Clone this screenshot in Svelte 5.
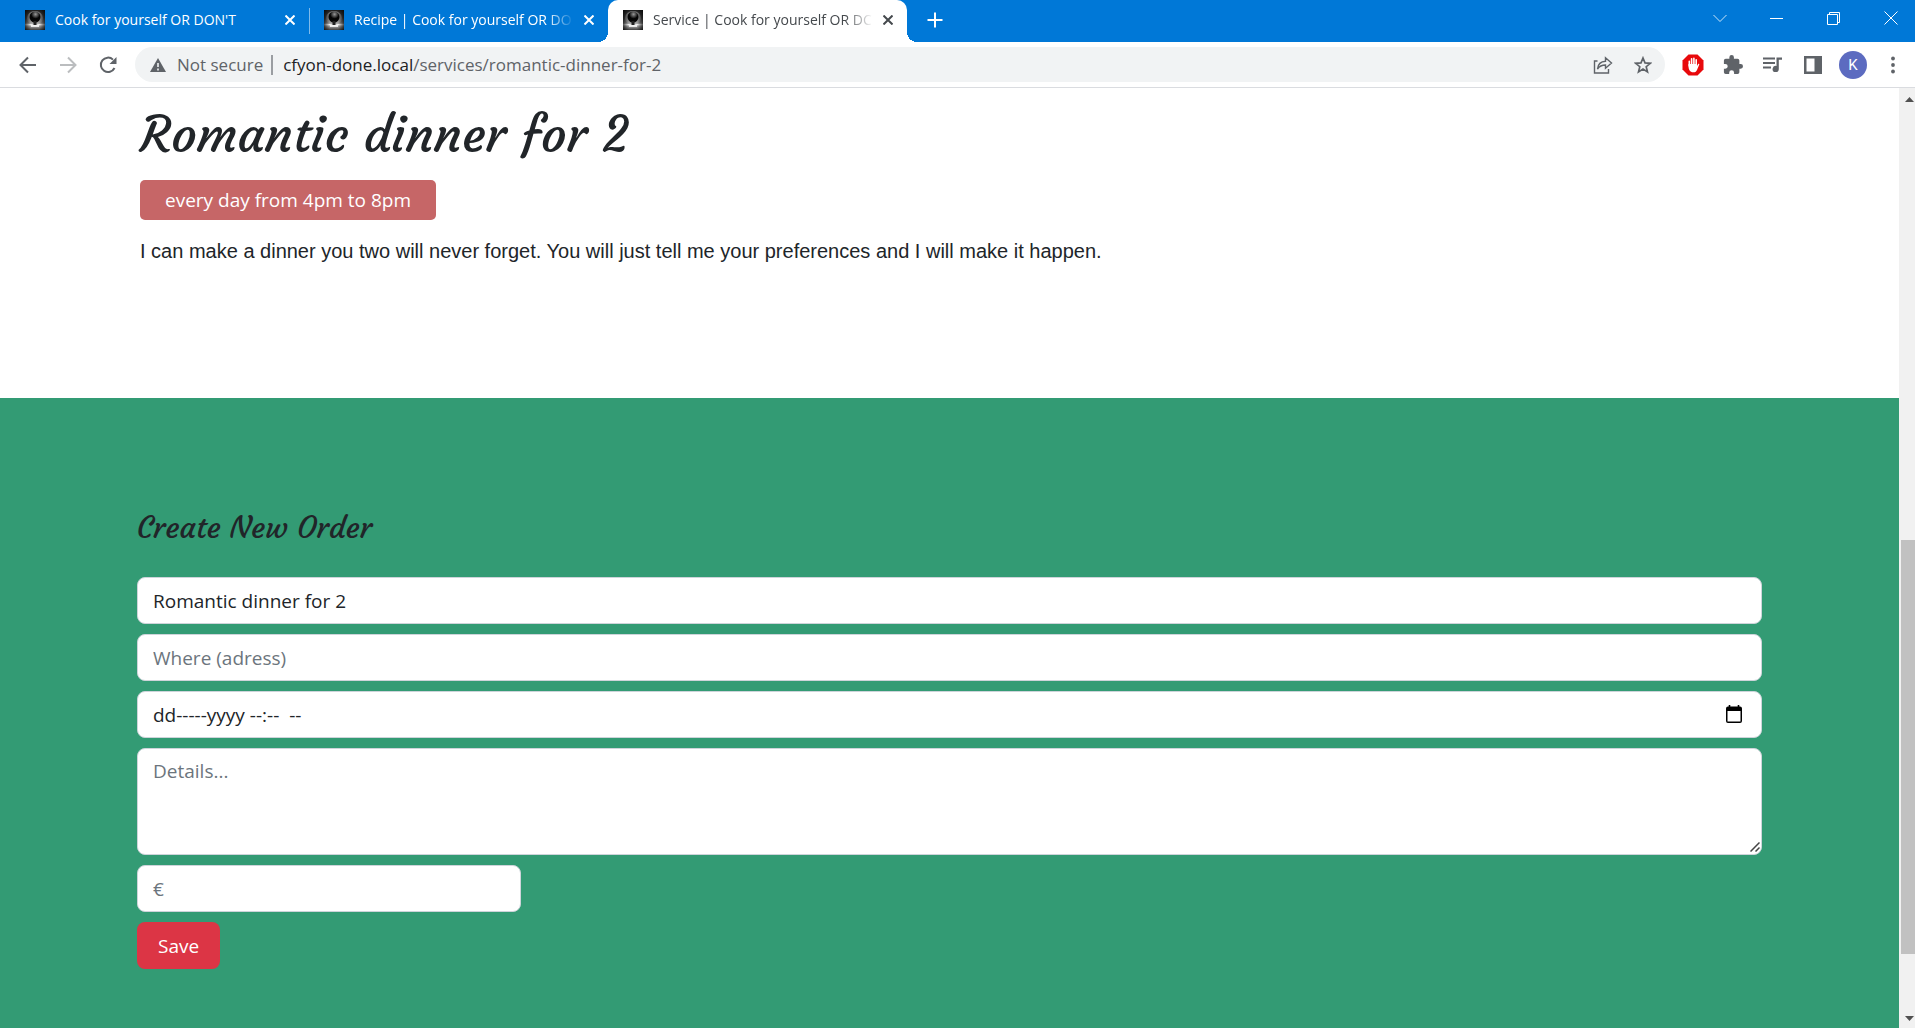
<script>
  const tabs = [
    { title: "Cook for yourself OR DON'T", active: false },
    { title: "Recipe | Cook for yourself OR DO", active: false },
    { title: "Service | Cook for yourself OR DC", active: true }
  ];
  let what = $state('Romantic dinner for 2');
  let where = $state('');
  let when = $state('dd-----yyyy --:--  --');
  let details = $state('');
  let price = $state('');
</script>

<div class="window">
  <header>
    <div class="tabstrip">
      {#each tabs as tab, i}
        <div class="tab" class:active={tab.active} class:divided={i === 0}>
          <svg class="favicon" viewBox="0 0 20 20" aria-hidden="true">
            <defs>
              <linearGradient id="bg{i}" x1="0" y1="0" x2="0" y2="1">
                <stop offset="0" stop-color="#1c1c1c" />
                <stop offset=".4" stop-color="#555" />
                <stop offset=".66" stop-color="#999" />
                <stop offset=".73" stop-color="#fff" />
                <stop offset=".8" stop-color="#aaa" />
                <stop offset="1" stop-color="#3c3c3c" />
              </linearGradient>
              <linearGradient id="edge{i}">
                <stop offset="0" stop-color="#000" stop-opacity=".7" />
                <stop offset=".3" stop-color="#000" stop-opacity="0" />
                <stop offset=".7" stop-color="#000" stop-opacity="0" />
                <stop offset="1" stop-color="#000" stop-opacity=".7" />
              </linearGradient>
              <radialGradient id="ball{i}" cx=".55" cy=".25" r=".4">
                <stop offset="0" stop-color="#999" />
                <stop offset="1" stop-color="#050505" />
              </radialGradient>
            </defs>
            <rect width="20" height="20" fill="url(#bg{i})" />
            <ellipse cx="10" cy="8" rx="8" ry="7" fill="#aaa" opacity=".6" />
            <rect width="20" height="20" fill="url(#edge{i})" />
            <circle cx="10" cy="7" r="5.5" fill="url(#ball{i})" />
            <path d="M8.500 11h3v4h-3z" fill="#222" />
            <path d="M6 16h8" stroke="#fff" stroke-width="1.500" />
          </svg>
          <span class="title" class:fade={i > 0}>{tab.title}</span>
          <button class="close" aria-label="Close tab">
            <svg width="10" height="10" viewBox="0 0 10 10"><path d="M.5.5l9 9M9.500.5l-9 9" /></svg>
          </button>
        </div>
      {/each}
      <button class="newtab" aria-label="New tab">
        <svg width="16" height="16" viewBox="0 0 16 16"><path d="M8 .5v15M.5 8h15" stroke="#fff" stroke-width="2" /></svg>
      </button>
      <div class="controls">
        <button aria-label="Search tabs"><svg width="14" height="14" viewBox="0 0 14 14"><path d="M.5 4l6.500 6.500L13.500 4" opacity=".8" /></svg></button>
        <button aria-label="Minimize"><svg width="14" height="14" viewBox="0 0 14 14"><path d="M0 7.500h13" /></svg></button>
        <button aria-label="Restore"><svg width="14" height="14" viewBox="0 0 14 14"><path d="M.5 3.500h10v10h-10zM2.500 3.500v-2h10v10h-2" /></svg></button>
        <button aria-label="Close"><svg width="14" height="14" viewBox="0 0 14 14"><path d="M.5.5l13 13M13.500.5l-13 13" /></svg></button>
      </div>
    </div>

    <div class="toolbar">
      <button class="nav" aria-label="Back">
        <svg width="18" height="18" viewBox="0 0 18 18"><path d="M17 9H2M9 1.500L1.500 9 9 16.500" stroke="#5f6368" stroke-width="2" fill="none" /></svg>
      </button>
      <button class="nav" aria-label="Forward">
        <svg width="18" height="18" viewBox="0 0 18 18"><path d="M1 9h15M9 1.500L16.500 9 9 16.500" stroke="#bbbdbf" stroke-width="2" fill="none" /></svg>
      </button>
      <button class="nav" aria-label="Reload">
        <svg width="18" height="18" viewBox="0 0 18 18"><path d="M15.500 12A7.200 7.200 0 1 1 14 3.600" stroke="#5f6368" stroke-width="2" fill="none" /><path d="M17.500 1v7h-7z" fill="#5f6368" /></svg>
      </button>
      <div class="omnibox">
        <svg width="16" height="14" viewBox="0 0 16 14"><path d="M8 0l8 14H0z" fill="#5f6368" /><path d="M8 5v4M8 10.500v2" stroke="#f1f3f4" stroke-width="1.600" /></svg>
        <span class="insecure">Not secure</span>
        <span class="bar"></span>
        <span class="url"><b>cfyon-done.local</b>/services/romantic-dinner-for-2</span>
        <button class="inbox" aria-label="Share">
          <svg width="20" height="18" viewBox="0 0 20 18" fill="none" stroke="#5f6368" stroke-width="1.400"><path d="M4.500 5H1.500v12h14v-4" /><path d="M4.500 13c.5-5 3.500-7.500 8-7.700V1.800L18.500 7l-6 5.200V9c-3.500 0-6 1-8 4z" /></svg>
        </button>
        <button class="inbox" aria-label="Bookmark">
          <svg width="18" height="18" viewBox="0 0 18 18" fill="none" stroke="#5f6368" stroke-width="1.700"><path d="M9 2l2 4.900 5.300.4-4.100 3.400 1.300 5.200L9 13.100l-4.500 2.800 1.300-5.200-4.100-3.400L7 6.900z" /></svg>
        </button>
      </div>
      <div class="extensions">
        <button aria-label="Ad blocker">
          <svg width="22" height="22" viewBox="0 0 22 22"><path d="M6.500.5h9l6 6v9l-6 6h-9l-6-6v-9z" fill="#e8090c" /><path d="M7.300 12V7.200M9.600 11V4.800M11.900 11V4.300M14.200 11V5.800" stroke="#fff" stroke-width="1.600" stroke-linecap="round" /><path d="M6.500 10h8.500v2l1-1.700c.5-.8 1.500-.4 1.200.5L15.200 15.500C14.500 17.500 13.300 18.300 11.300 18.300 8 18.300 6.500 15.500 6.500 12z" fill="#fff" /></svg>
        </button>
        <button aria-label="Extensions">
          <svg width="20" height="20" viewBox="1 1 22 22"><path fill="#5f6368" d="M20.500 11H19V7a2 2 0 0 0-2-2h-4V3.500a2.500 2.500 0 0 0-5 0V5H4a2 2 0 0 0-2 2v3.800h1.500a2.700 2.700 0 0 1 0 5.400H2V20a2 2 0 0 0 2 2h3.800v-1.500a2.700 2.700 0 0 1 5.400 0V22H17a2 2 0 0 0 2-2v-4h1.500a2.500 2.500 0 0 0 0-5z" /></svg>
        </button>
        <button aria-label="Media controls">
          <svg width="20" height="18" viewBox="0 0 20 18"><path d="M0 2.500h12M0 7h12M0 11.500h8" stroke="#5f6368" stroke-width="2" /><path d="M13.500 1.500H19v2.300h-3.200V13a3.100 3.100 0 1 1-2.300-3z" fill="#5f6368" /></svg>
        </button>
        <button aria-label="Side panel">
          <svg width="18" height="18" viewBox="0 0 18 18"><path d="M0 0h18v18H0zM2.500 2.500v13h8v-13z" fill="#5f6368" fill-rule="evenodd" /></svg>
        </button>
        <button class="avatar" aria-label="Profile">K</button>
        <button class="menu" aria-label="Menu">
          <svg width="4" height="18" viewBox="0 0 4 18" fill="#5f6368"><circle cx="2" cy="2.500" r="1.900" /><circle cx="2" cy="9" r="1.900" /><circle cx="2" cy="15.500" r="1.900" /></svg>
        </button>
      </div>
    </div>
  </header>

  <div class="viewport">
    <main>
      <article class="container">
        <h1>Romantic dinner for 2</h1>
        <span class="badge">every day from 4pm to 8pm</span>
        <p>I can make a dinner you two will never forget. You will just tell me your preferences and I will make it happen.</p>
      </article>
      <section class="order">
        <form class="container" onsubmit={(e) => e.preventDefault()}>
          <h2>Create New Order</h2>
          <input type="text" aria-label="Service" bind:value={what} />
          <input type="text" aria-label="Where" placeholder="Where (adress)" bind:value={where} />
          <div class="field">
            <input type="text" aria-label="When" bind:value={when} />
            <button type="button" aria-label="Show date picker">
              <svg width="16" height="18" viewBox="0 0 16 18"><path d="M3.500 0v3M12.500 0v3" stroke="#000" stroke-width="1.600" /><path d="M2 1.500h12a2 2 0 0 1 2 2v12.500a2 2 0 0 1-2 2H2a2 2 0 0 1-2-2V3.500a2 2 0 0 1 2-2zM1.500 6v10.500h13V6z" fill="#000" fill-rule="evenodd" /></svg>
            </button>
          </div>
          <div class="field">
            <textarea aria-label="Details" placeholder="Details..." bind:value={details}></textarea>
            <svg class="grip" width="10" height="10" viewBox="0 0 10 10" aria-hidden="true"><path d="M.5 9.500l9-9M5.500 9.500l4-4" /></svg>
          </div>
          <input class="price" type="text" aria-label="Price" placeholder="€" bind:value={price} />
          <button class="save">Save</button>
        </form>
      </section>
    </main>
    <div class="scrollbar" aria-hidden="true">
      <svg width="16" height="17" viewBox="0 0 16 17"><path d="M6 14l4.500-5 4.500 5z" fill="#505050" /></svg>
      <div class="before"></div>
      <div class="thumb"></div>
      <div class="after"></div>
      <svg width="16" height="17" viewBox="0 0 16 17"><path d="M6 5l4.500 5L15 5z" fill="#505050" /></svg>
    </div>
  </div>
</div>

<style>
  :global(body) {
    margin: 0;
  }
  .window {
    --ui: 'Open Sans', 'Noto Sans', sans-serif;
    --script: Courgette, Lato, 'Open Sans', cursive;
    display: flex;
    flex-direction: column;
    min-height: 100vh;
    font-family: var(--ui);
    color: #212529;
    background: #fff;
  }
  .window :global(*) {
    box-sizing: border-box;
  }
  svg {
    display: block;
    flex: none;
  }
  button {
    font: inherit;
    color: inherit;
    border: 0;
    padding: 0;
    background: none;
    display: flex;
    align-items: center;
    justify-content: center;
  }

  .tabstrip {
    display: flex;
    height: 42px;
    padding-left: 10px;
    background: #0078d7;
    color: #fff;
  }
  .tab {
    position: relative;
    display: flex;
    align-items: center;
    width: 299px;
    height: 42px;
    padding: 0 9px 2px 15px;
    font-size: 14px;
  }
  .tab.divided::after {
    content: '';
    position: absolute;
    right: -1px;
    top: 8px;
    height: 26px;
    border-right: 1px solid #7fbbeb;
  }
  .tab.active {
    background: #fff;
    color: #45494d;
    border-radius: 10px 10px 0 0;
  }
  .tab.active::before,
  .tab.active::after {
    content: '';
    position: absolute;
    bottom: 0;
    width: 10px;
    height: 10px;
  }
  .tab.active::before {
    right: 100%;
    background: radial-gradient(circle at 0 0, transparent 10px, #fff 10px);
  }
  .tab.active::after {
    left: 100%;
    background: radial-gradient(circle at 100% 0, transparent 10px, #fff 10px);
  }
  .favicon {
    width: 20px;
    height: 20px;
  }
  .title {
    flex: 1;
    min-width: 0;
    margin-left: 10px;
    line-height: 20px;
    white-space: nowrap;
  }
  .title.fade {
    mask-image: linear-gradient(to right, #000 calc(100% - 28px), transparent);
  }
  .close {
    width: 20px;
    height: 20px;
    margin-left: 5px;
  }
  .close svg {
    stroke: currentColor;
    stroke-width: 2;
  }
  .newtab {
    width: 36px;
    margin-left: 10px;
    padding-bottom: 2px;
  }
  .controls {
    display: flex;
    margin-left: auto;
    padding-bottom: 7px;
  }
  .controls button {
    width: 57px;
  }
  .controls button:last-child {
    width: 53px;
    padding-left: 4px;
  }
  .controls svg {
    fill: none;
    stroke: #fff;
    stroke-width: 1;
  }

  .toolbar {
    display: flex;
    align-items: center;
    height: 46px;
    padding: 0 9px 0 8px;
    border-bottom: 1px solid #dadce0;
    background: #fff;
  }
  .nav {
    width: 40px;
    height: 36px;
  }
  .omnibox {
    display: flex;
    flex: 1;
    align-items: center;
    height: 35px;
    margin-left: 7px;
    padding: 0 2px 0 15px;
    border-radius: 18px;
    background: #f1f3f4;
    font-size: 17px;
    color: #5f6368;
  }
  .insecure {
    margin-left: 11px;
  }
  .bar {
    width: 2px;
    height: 20px;
    margin: 0 10px 0 8px;
    background: #9a9da1;
  }
  .url {
    flex: 1;
  }
  .url b {
    font-weight: 400;
    color: #202124;
  }
  .inbox {
    width: 40px;
    height: 35px;
  }
  .extensions {
    display: flex;
    align-items: center;
    margin-left: 8px;
  }
  .extensions button {
    width: 40px;
    height: 36px;
  }
  .extensions .avatar {
    width: 28px;
    height: 28px;
    margin: 0 6px;
    border-radius: 50%;
    background: #5c6bc0;
    color: #fff;
    font: 15px Roboto, sans-serif;
  }
  .extensions .menu {
    width: 26px;
    margin-left: 7px;
  }

  .viewport {
    display: flex;
    flex: 1;
  }
  main {
    display: flex;
    flex: 1;
    flex-direction: column;
  }
  .container {
    width: 86%;
    max-width: 1625px;
    margin: 0 auto;
  }
  article {
    height: 310px;
    padding: 16px 3px 0;
  }
  h1,
  h2 {
    margin: 0;
    font-family: var(--script);
    font-weight: 400;
  }
  h1 {
    font-size: 50px;
    line-height: 62px;
  }
  .badge {
    display: inline-block;
    margin-top: 14px;
    padding: 0 25px;
    border-radius: 5px;
    background: #c66667;
    color: #fff;
    font-size: 19px;
    line-height: 40px;
  }
  p {
    margin: 16px 0 0;
    font: 20px/30px 'Liberation Sans', Arial, sans-serif;
  }
  .order {
    flex: 1;
    padding: 110px 0 58px;
    background: #339b74;
  }
  form {
    display: flex;
    flex-direction: column;
    align-items: flex-start;
    gap: 10px;
  }
  h2 {
    margin-bottom: 19px;
    font-size: 30px;
    line-height: 40px;
  }
  input,
  textarea {
    display: block;
    width: 100%;
    height: 47px;
    margin: 0;
    padding: 7px 15px;
    border: 1px solid #ced4da;
    border-radius: 8px;
    outline: 0;
    background: #fff;
    color: #212529;
    font: 19px/30px var(--ui);
  }
  textarea {
    height: 107px;
    resize: vertical;
  }
  textarea::-webkit-resizer {
    background: transparent;
  }
  ::placeholder {
    color: #6c757d;
    opacity: 1;
  }
  .price {
    width: 384px;
  }
  .field {
    position: relative;
    width: 100%;
  }
  .field button {
    position: absolute;
    right: 16px;
    top: 11px;
    width: 24px;
    height: 24px;
  }
  .field input {
    white-space: pre;
  }
  .grip {
    position: absolute;
    right: 2px;
    bottom: 3px;
    fill: none;
    stroke: #444;
    stroke-width: 1.5;
    pointer-events: none;
  }
  .save {
    height: 47px;
    padding: 0 21px;
    border-radius: 8px;
    background: #dc3545;
    color: #fff;
    font-size: 19px;
  }

  .scrollbar {
    display: flex;
    flex-direction: column;
    width: 16px;
    background: #f1f1f1;
  }
  .before {
    flex: 435;
  }
  .thumb {
    flex: 414;
    margin-left: 2px;
    background: #c1c1c1;
  }
  .after {
    flex: 57;
  }
</style>
